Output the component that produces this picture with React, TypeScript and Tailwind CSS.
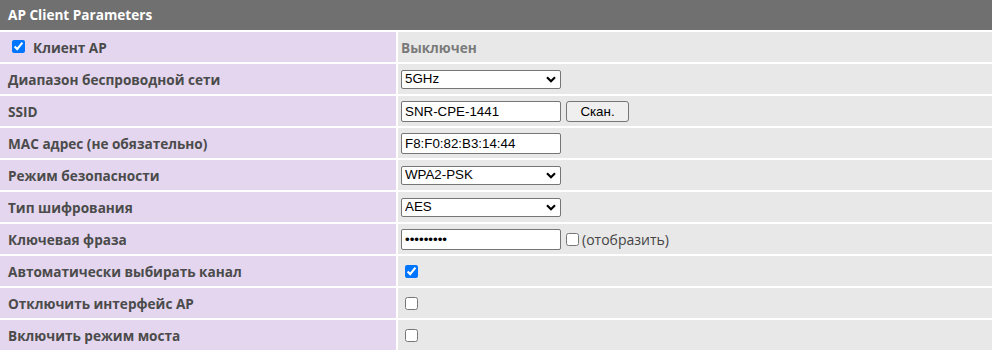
const labelFont = { fontFamily: '"Open Sans", "Noto Sans", sans-serif' };

function Select({ value }: { value: string }) {
  return (
    <div className="relative w-[160px] h-[19px]">
      <select
        defaultValue={value}
        className="block appearance-none w-full h-full bg-white border border-[#767676] rounded-[2px] pl-[3px] text-[13.33px] leading-none text-black font-['Liberation_Sans',Arial,sans-serif] outline-none"
      >
        <option>{value}</option>
      </select>
      <svg
        viewBox="0 0 10 7"
        className="absolute right-[5px] top-[6px] w-[10px] h-[7px] pointer-events-none"
      >
        <path d="M1 1.2 L5 5.2 L9 1.2" fill="none" stroke="#000" strokeWidth="2.2" />
      </svg>
    </div>
  );
}

function TextInput({ value, type = "text" }: { value: string; type?: string }) {
  return (
    <input
      type={type}
      defaultValue={value}
      className="block w-[160px] h-[21px] bg-white border border-[#767676] rounded-[2px] px-[3px] text-[13.33px] text-black font-['Liberation_Sans',Arial,sans-serif] outline-none"
    />
  );
}

function Checkbox({ checked = false }: { checked?: boolean }) {
  return (
    <input
      type="checkbox"
      defaultChecked={checked}
      className="block w-[13px] h-[13px] m-0"
    />
  );
}

function Row({ label, children }: { label: React.ReactNode; children?: React.ReactNode }) {
  return (
    <>
      <div
        className="h-[30px] bg-[#e3d6ee] flex items-center pl-[8px] pt-[2px] text-[13.6px] font-bold text-[#4b4b4b]"
        style={labelFont}
      >
        {label}
      </div>
      <div className="h-[30px] bg-[#e8e8e8] flex items-center pl-[3px] gap-[5px]">{children}</div>
    </>
  );
}

export default function App() {
  return (
    <div className="w-[992px] h-[350px] bg-white overflow-hidden">
      <div className="grid grid-cols-[396px_1fr] gap-[2px]">
        <div
          className="col-span-2 h-[30px] bg-[#707070] flex items-center pl-[8px] pt-[1px] text-[13.6px] font-bold text-white"
          style={labelFont}
        >
          AP Client Parameters
        </div>

        <Row
          label={
            <span className="flex items-center gap-[8px] pl-[4px]">
              <span className="-mt-[2px]">
                <Checkbox checked />
              </span>
              Клиент AP
            </span>
          }
        >
          <span className="pt-[2px] text-[13.6px] font-bold text-[#7a7a7a]" style={labelFont}>
            Выключен
          </span>
        </Row>

        <Row label="Диапазон беспроводной сети">
          <Select value="5GHz" />
        </Row>

        <Row label="SSID">
          <TextInput value="SNR-CPE-1441" />
          <button className="block w-[63px] h-[21px] bg-[#efefef] border border-[#767676] rounded-[3px] text-[13.33px] text-black font-['Liberation_Sans',Arial,sans-serif]">
            Скан.
          </button>
        </Row>

        <Row label="MAC адрес (не обязательно)">
          <TextInput value="F8:F0:82:B3:14:44" />
        </Row>

        <Row label="Режим безопасности">
          <Select value="WPA2-PSK" />
        </Row>

        <Row label="Тип шифрования">
          <Select value="AES" />
        </Row>

        <Row label="Ключевая фраза">
          <TextInput value="123456789" type="password" />
          <span className="flex items-center gap-[3px] text-[14px] text-[#444]" style={labelFont}>
            <Checkbox />
            <span className="pt-[1px]">(отобразить)</span>
          </span>
        </Row>

        <Row label="Автоматически выбирать канал">
          <span className="pl-[4px] flex items-center">
            <Checkbox checked />
          </span>
        </Row>

        <Row label="Отключить интерфейс AP">
          <span className="pl-[4px] flex items-center">
            <Checkbox />
          </span>
        </Row>

        <Row label="Включить режим моста">
          <span className="pl-[4px] flex items-center">
            <Checkbox />
          </span>
        </Row>
      </div>
    </div>
  );
}
